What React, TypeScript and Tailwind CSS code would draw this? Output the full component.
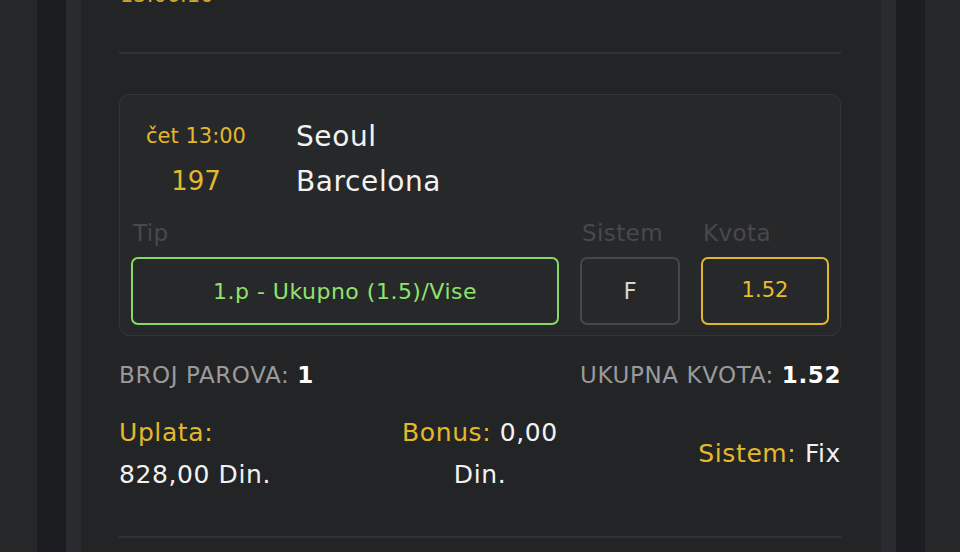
const font = { fontFamily: '"DejaVu Sans", "Noto Sans", sans-serif' };

function Field({ label, value, className, box }: { label: string; value: string; className: string; box: string }) {
  return (
    <div className={`flex flex-col ${className}`}>
      <span className="pl-[2px] text-[23px] leading-[28px] tracking-[0.4px] text-[#48494c]">{label}</span>
      <div className={`mt-[10px] flex h-[68px] items-center justify-center rounded-[7px] border-2 ${box}`}>
        {value}
      </div>
    </div>
  );
}

export default function App() {
  return (
    <div className="flex h-[552px] w-[960px] overflow-hidden bg-[#252628]" style={font}>
      <div className="w-[37px] bg-[#262729]" />
      <div className="w-[29px] bg-[#1c1d21]" />
      <div className="w-[15px] bg-[#2a2b2e]" />

      <main className="flex w-[800px] flex-col bg-[#232426] pl-[38px] pr-[40px]">
        <div className="-mt-[19px] pl-[1px] text-[21px] leading-[28px] text-[#cfa82a]">13.06.10</div>
        <div className="mt-[43px] h-[2px] bg-[#313235]" />

        <section className="mt-[40px] rounded-[10px] border border-[#333437] bg-[#27282a] pb-[10px] pl-[11px] pr-[11px] pt-[19px]">
          <div className="flex">
            <div className="-ml-[11px] flex w-[152px] flex-col items-center text-[#e3b82b]">
              <span className="text-[21px] leading-[45px]">čet 13:00</span>
              <span className="text-[26px] leading-[45px]">197</span>
            </div>
            <div className="ml-[24px] flex flex-col text-[28px] leading-[45px] tracking-[0.6px] text-[#f2f2f2]">
              <span>Seoul</span>
              <span>Barcelona</span>
            </div>
          </div>

          <div className="mt-[15px] flex gap-[21px]">
            <Field
              label="Tip"
              value="1.p - Ukupno (1.5)/Vise"
              className="w-[428px]"
              box="border-[#86d964] text-[22px] tracking-[0.5px] text-[#8fe36b]"
            />
            <Field
              label="Sistem"
              value="F"
              className="w-[100px]"
              box="border-[#46474a] text-[23px] text-[#d4d4d4]"
            />
            <Field
              label="Kvota"
              value="1.52"
              className="w-[128px]"
              box="border-[#e0b62c] text-[21px] text-[#e8bd2c]"
            />
          </div>
        </section>

        <div className="mt-[25px] flex justify-between text-[23px] uppercase leading-[28px] tracking-[0.6px] text-[#9a9a9c]">
          <span>
            Broj parova: <span className="font-bold text-white">1</span>
          </span>
          <span>
            Ukupna kvota: <span className="font-bold text-white">1.52</span>
          </span>
        </div>

        <div className="mt-[23px] grid grid-cols-3 items-center text-[25px] leading-[42px] tracking-[0.6px] text-[#f2f2f2]">
          <div className="flex flex-col">
            <span className="text-[#e3b82b]">Uplata:</span>
            <span>828,00 Din.</span>
          </div>
          <div className="text-center">
            <span className="text-[#e3b82b]">Bonus:</span> 0,00
            <br />
            Din.
          </div>
          <div className="text-right">
            <span className="text-[#e3b82b]">Sistem:</span> Fix
          </div>
        </div>

        <div className="mt-[40px] h-[2px] bg-[#313235]" />
      </main>

      <div className="w-[15px] bg-[#2a2b2e]" />
      <div className="w-[29px] bg-[#1c1d21]" />
      <div className="w-[35px] bg-[#262729]" />
    </div>
  );
}
